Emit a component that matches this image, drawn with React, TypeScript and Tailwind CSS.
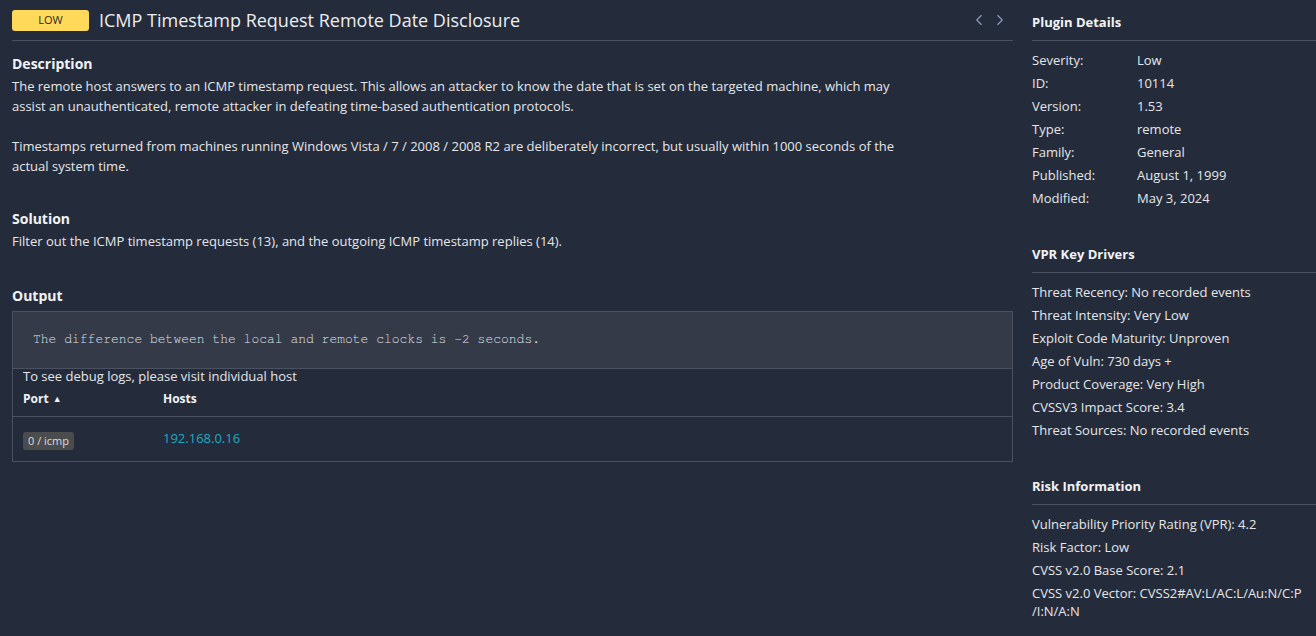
import React from "react";
import { ChevronLeft, ChevronRight } from "lucide-react";

const plugin: [string, string][] = [
  ["Severity:", "Low"],
  ["ID:", "10114"],
  ["Version:", "1.53"],
  ["Type:", "remote"],
  ["Family:", "General"],
  ["Published:", "August 1, 1999"],
  ["Modified:", "May 3, 2024"],
];

const vpr = [
  "Threat Recency: No recorded events",
  "Threat Intensity: Very Low",
  "Exploit Code Maturity: Unproven",
  "Age of Vuln: 730 days +",
  "Product Coverage: Very High",
  "CVSSV3 Impact Score: 3.4",
  "Threat Sources: No recorded events",
];

const risk: React.ReactNode[] = [
  "Vulnerability Priority Rating (VPR): 4.2",
  "Risk Factor: Low",
  "CVSS v2.0 Base Score: 2.1",
  <>
    CVSS v2.0 Vector: CVSS2#AV:L/AC:L/Au:N/C:P
    <br />
    /I:N/A:N
  </>,
];

function SideHeading({ children }: { children: React.ReactNode }) {
  return (
    <div className="h-[41px] pt-[12px] border-b border-[#4a5161] text-[13px] leading-[20px] font-bold text-[#f2f3f5]">
      {children}
    </div>
  );
}

export default function App() {
  return (
    <div
      className="min-h-[636px] w-[1316px] bg-[#242c3b] text-[#e4e6ea] flex pl-[12px] gap-[19px]"
      style={{ fontFamily: '"Open Sans", "Noto Sans", sans-serif' }}
    >
      {/* Left column */}
      <div className="w-[1001px] shrink-0">
        <div className="h-[41px] flex items-center border-b border-[#4a5161]">
          <div className="w-[77px] h-[21px] rounded-[3px] bg-[#ffd95a] text-[#2a2a2a] text-[11px] flex items-center justify-center">
            LOW
          </div>
          <div className="ml-[10px] text-[18px] text-[#eceef1] leading-[24px]">
            ICMP Timestamp Request Remote Date Disclosure
          </div>
          <div className="ml-auto mr-[4px] flex items-center gap-[3px] text-[#8f9cc6]">
            <ChevronLeft size={18} strokeWidth={1.5} />
            <ChevronRight size={18} strokeWidth={1.5} />
          </div>
        </div>

        <div className="mt-[13px] text-[14px] leading-[20px] font-bold text-[#f2f3f5] mb-[2px]">
          Description
        </div>
        <div className="w-[905px] text-[13px] leading-[20px]">
          <p>
            The remote host answers to an ICMP timestamp request. This allows an attacker to know the date that is set on the targeted machine, which may assist an unauthenticated, remote attacker in defeating time-based authentication protocols.
          </p>
          <p className="mt-[20px]">
            Timestamps returned from machines running Windows Vista / 7 / 2008 / 2008 R2 are deliberately incorrect, but usually within 1000 seconds of the actual system time.
          </p>
        </div>

        <div className="mt-[33px] text-[14px] leading-[20px] font-bold text-[#f2f3f5] mb-[2px]">
          Solution
        </div>
        <div className="text-[13px] leading-[20px]">
          Filter out the ICMP timestamp requests (13), and the outgoing ICMP timestamp replies (14).
        </div>

        <div className="mt-[35px] text-[14px] leading-[20px] font-bold text-[#f2f3f5] mb-[5px]">
          Output
        </div>
        <div className="border border-[#4a5161]">
          <div className="h-[57px] bg-[#343a48] border-b border-[#4a5161] flex items-center px-[20px]">
            <pre
              className="text-[13px] text-[#e0e2e6] leading-[16px]"
              style={{ fontFamily: '"Nimbus Mono PS", "FreeMono", "Courier New", "Liberation Mono", monospace' }}
            >
              The difference between the local and remote clocks is -2 seconds.
            </pre>
          </div>
          <div className="px-[10px] text-[13px] leading-[15px]">
            To see debug logs, please visit individual host
          </div>
          <div className="flex px-[10px] pt-[5px] pb-[7px] border-b border-[#4a5161] text-[12px] leading-[20px] font-bold text-[#f2f3f5]">
            <div className="w-[140px] flex items-center gap-[4px]">
              Port <span className="text-[9px] font-normal">▲</span>
            </div>
            <div>Hosts</div>
          </div>
          <div className="flex items-center h-[44px] px-[10px]">
            <div className="w-[140px]">
              <span className="inline-flex items-center h-[18px] px-[5px] rounded-[3px] bg-[#4b4c4e] text-[11px] text-[#dcdcdc]">
                0 / icmp
              </span>
            </div>
            <div className="text-[13px] text-[#22a8c4]">192.168.0.16</div>
          </div>
        </div>
      </div>

      {/* Right column */}
      <div className="flex-1 text-[13px]">
        <SideHeading>Plugin Details</SideHeading>
        <div className="mt-[8px]">
          {plugin.map(([k, v]) => (
            <div key={k} className="flex leading-[23px]">
              <div className="w-[105px]">{k}</div>
              <div>{v}</div>
            </div>
          ))}
        </div>

        <div className="mt-[22px]">
          <SideHeading>VPR Key Drivers</SideHeading>
          <div className="mt-[8px]">
            {vpr.map((t) => (
              <div key={t} className="leading-[23px]">
                {t}
              </div>
            ))}
          </div>
        </div>

        <div className="mt-[22px]">
          <SideHeading>Risk Information</SideHeading>
          <div className="mt-[8px]">
            {risk.map((t, i) => (
              <div key={i} className="leading-[18px] pt-[2px] pb-[3px]">
                {t}
              </div>
            ))}
          </div>
        </div>
      </div>
    </div>
  );
}
